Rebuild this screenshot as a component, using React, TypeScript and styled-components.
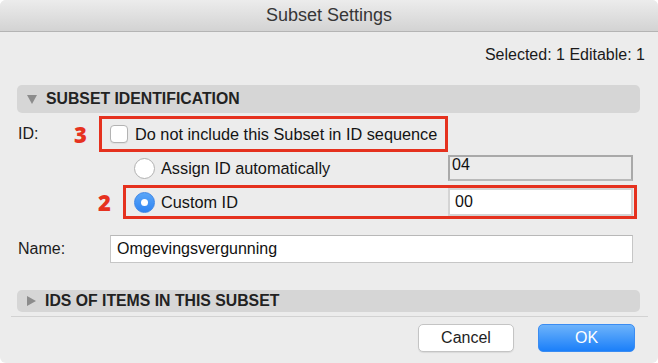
import React from 'react';
import styled, { createGlobalStyle } from 'styled-components';

const GlobalStyle = createGlobalStyle`
  html, body {
    margin: 0;
    padding: 0;
    background: #ffffff;
  }
  body {
    font-family: 'Liberation Sans', Arial, sans-serif;
    color: #1c1c1c;
  }
`;

export default function App() {
  return (
    <>
      <GlobalStyle />
      <Window>
        <TitleBar>Subset Settings</TitleBar>

        <StatusRow>Selected: 1 Editable: 1</StatusRow>

        <SectionHeader $height={28}>
          <Triangle $open />
          <SectionTitle>SUBSET IDENTIFICATION</SectionTitle>
        </SectionHeader>

        <MarkedRow $top={3} $height={36}>
          <FieldLabel $width={55}>ID:</FieldLabel>
          <Marker $width={14}>3</Marker>
          <Highlight $width={349}>
            <Checkbox />
            <OptionText>Do not include this Subset in ID sequence</OptionText>
          </Highlight>
        </MarkedRow>

        <OptionRow>
          <Radio />
          <OptionText>Assign ID automatically</OptionText>
          <IdField $disabled>04</IdField>
        </OptionRow>

        <MarkedRow $top={4} $height={34}>
          <Marker $width={93}>2</Marker>
          <Highlight $width={514}>
            <Radio $checked />
            <OptionText>Custom ID</OptionText>
            <IdField>00</IdField>
          </Highlight>
        </MarkedRow>

        <NameRow>
          <FieldLabel $width={92}>Name:</FieldLabel>
          <TextInput>Omgevingsvergunning</TextInput>
        </NameRow>

        <SectionHeader $height={22} $top={27}>
          <Triangle />
          <SectionTitle>IDS OF ITEMS IN THIS SUBSET</SectionTitle>
        </SectionHeader>

        <Separator />

        <ButtonRow>
          <Button>Cancel</Button>
          <Button $primary>OK</Button>
        </ButtonRow>
      </Window>
    </>
  );
}

const Window = styled.div`
  width: 658px;
  height: 363px;
  background: #ececec;
  border-radius: 6px;
  overflow: hidden;
  display: flex;
  flex-direction: column;
`;

const TitleBar = styled.div`
  box-sizing: border-box;
  height: 32px;
  border-bottom: 1px solid #b4b4b4;
  background: linear-gradient(#ececec, #d3d3d3);
  display: flex;
  align-items: center;
  justify-content: center;
  font-size: 18px;
  color: #363636;
`;

const StatusRow = styled.div`
  box-sizing: border-box;
  height: 53px;
  padding: 14px 13px 0 0;
  text-align: right;
  font-size: 16px;
  line-height: 18px;
  color: #1a1a1a;
`;

const SectionHeader = styled.div<{ $height: number; $top?: number }>`
  height: ${(p) => p.$height}px;
  margin: ${(p) => p.$top ?? 0}px 18px 0 17px;
  padding-left: 10px;
  border-radius: 5px;
  background: #d6d6d6;
  display: flex;
  align-items: center;
  gap: 9px;
`;

const Triangle = styled.span<{ $open?: boolean }>`
  width: 0;
  height: 0;
  ${(p) =>
    p.$open
      ? `
    border-left: 5px solid transparent;
    border-right: 5px solid transparent;
    border-top: 9px solid #8c8c8c;
  `
      : `
    border-top: 5px solid transparent;
    border-bottom: 5px solid transparent;
    border-left: 9px solid #8c8c8c;
  `}
`;

const SectionTitle = styled.span`
  font-size: 15.8px;
  font-weight: bold;
  color: #222;
`;

const MarkedRow = styled.div<{ $top: number; $height: number }>`
  height: ${(p) => p.$height}px;
  margin-top: ${(p) => p.$top}px;
  padding-left: 18px;
  display: flex;
  align-items: center;
`;

const FieldLabel = styled.span<{ $width: number }>`
  width: ${(p) => p.$width}px;
  flex: none;
  font-size: 16px;
`;

const Marker = styled.span<{ $width: number }>`
  width: ${(p) => p.$width}px;
  margin-right: 12px;
  flex: none;
  text-align: right;
  font-family: 'Open Sans', sans-serif;
  font-weight: 800;
  font-size: 22px;
  color: #e6321f;
`;

const Highlight = styled.div<{ $width: number }>`
  box-sizing: border-box;
  width: ${(p) => p.$width}px;
  height: 100%;
  border: 3px solid #e5311e;
  padding: 0 1px 0 8px;
  display: flex;
  align-items: center;
  gap: 6px;
`;

const Checkbox = styled.span`
  box-sizing: border-box;
  width: 18px;
  height: 18px;
  margin-right: 1px;
  border: 1px solid #b3b3b3;
  border-radius: 4px;
  background: #fff;
  box-shadow: 0 1px 1px rgba(0, 0, 0, 0.06);
`;

const Radio = styled.span<{ $checked?: boolean }>`
  box-sizing: border-box;
  width: 21px;
  height: 21px;
  flex: none;
  border-radius: 50%;
  display: flex;
  align-items: center;
  justify-content: center;
  ${(p) =>
    p.$checked
      ? `
    background: linear-gradient(#5aa6f8, #2f84f2);
    border: 1px solid #3d86e6;
    &::after {
      content: '';
      width: 7px;
      height: 7px;
      border-radius: 50%;
      background: #fff;
    }
  `
      : `
    background: #fff;
    border: 1px solid #b1b1b1;
  `}
`;

const OptionText = styled.span`
  font-size: 16.3px;
  color: #141414;
`;

const OptionRow = styled.div`
  height: 26px;
  margin-top: 3px;
  padding: 0 25px 0 134px;
  display: flex;
  align-items: center;
  gap: 6px;
`;

const IdField = styled.div<{ $disabled?: boolean }>`
  box-sizing: border-box;
  width: 185px;
  height: ${(p) => (p.$disabled ? 26 : 28)}px;
  margin-left: auto;
  font-size: 16px;
  color: #111;
  ${(p) =>
    p.$disabled
      ? `
    background: #ececec;
    border: 2px solid #a9a9a9;
    border-bottom-color: #b9b9b9;
    padding: 0 0 0 2px;
    line-height: 16px;
  `
      : `
    background: #fff;
    border: 2px solid #d4d4d4;
    padding: 0 0 0 5px;
    display: flex;
    align-items: center;
  `}
`;

const NameRow = styled.div`
  height: 28px;
  margin-top: 16px;
  padding-left: 18px;
  display: flex;
  align-items: center;
`;

const TextInput = styled.div`
  box-sizing: border-box;
  width: 523px;
  height: 28px;
  padding-left: 6px;
  background: #fff;
  border: 1px solid #c6c6c6;
  border-top-color: #b8b8b8;
  display: flex;
  align-items: center;
  font-size: 16px;
  color: #111;
`;

const Separator = styled.div`
  height: 1px;
  margin: 4px 10px 0 11px;
  background: #d2d2d2;
`;

const ButtonRow = styled.div`
  margin-top: 7px;
  padding-right: 23px;
  display: flex;
  justify-content: flex-end;
  gap: 24px;
`;

const Button = styled.button<{ $primary?: boolean }>`
  box-sizing: border-box;
  width: ${(p) => (p.$primary ? 97 : 96)}px;
  height: 28px;
  border-radius: 5px;
  font-family: 'Liberation Sans', Arial, sans-serif;
  font-size: 16px;
  ${(p) =>
    p.$primary
      ? `
    background: linear-gradient(#6db3fb, #1b7ff9);
    border: 1px solid #3a8cf2;
    color: #fff;
  `
      : `
    background: #fff;
    border: 1px solid #c4c4c4;
    color: #1e1e1e;
    box-shadow: 0 1px 1px rgba(0, 0, 0, 0.08);
  `}
`;
